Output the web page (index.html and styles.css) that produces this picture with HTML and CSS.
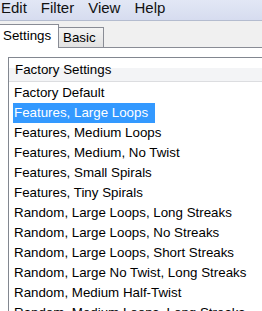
FILE: index.html
```html
<!DOCTYPE html>
<html lang="en">
<head>
    <meta charset="UTF-8">
    <meta name="viewport" content="width=device-width, initial-scale=1.0">
    <title>Presets</title>
    <link rel="stylesheet" href="styles.css">
</head>
<body>
    <div class="menubar">
        <span class="menu-item">Edit</span>
        <span class="menu-item">Filter</span>
        <span class="menu-item">View</span>
        <span class="menu-item">Help</span>
    </div>
    <div class="tabs">
        <div class="tab active">Settings</div>
        <div class="tab">Basic</div>
    </div>
    <div class="panel">
        <div class="listbox">
            <div class="list-header">Factory Settings</div>
            <div class="list-body">
                <div class="row"><span class="label">Factory Default</span></div>
                <div class="row"><span class="label selected">Features, Large Loops</span></div>
                <div class="row"><span class="label">Features, Medium Loops</span></div>
                <div class="row"><span class="label">Features, Medium, No Twist</span></div>
                <div class="row"><span class="label">Features, Small Spirals</span></div>
                <div class="row"><span class="label">Features, Tiny Spirals</span></div>
                <div class="row"><span class="label">Random, Large Loops, Long Streaks</span></div>
                <div class="row"><span class="label">Random, Large Loops, No Streaks</span></div>
                <div class="row"><span class="label">Random, Large Loops, Short Streaks</span></div>
                <div class="row"><span class="label">Random, Large No Twist, Long Streaks</span></div>
                <div class="row"><span class="label">Random, Medium Half-Twist</span></div>
                <div class="row"><span class="label">Random, Medium Loops, Long Streaks</span></div>
                <div class="row"><span class="label">Random, Medium Loops, No Streaks</span></div>
            </div>
        </div>
    </div>
</body>
</html>
```

FILE: styles.css
```css
body {
    margin: 0;
    width: 262px;
    height: 311px;
    overflow: hidden;
    background: #fff;
    font-family: "Liberation Sans", Arial, sans-serif;
    color: #000;
}

.menubar {
    display: flex;
    height: 19px;
    padding: 1px 0 0 1px;
    background: linear-gradient(#e2e7f5, #d6dcef);
    border-bottom: 1px solid #b4bccf;
    font-size: 15px;
    line-height: 14px;
    color: #111;
}

.menu-item {
    margin-right: 14px;
    white-space: nowrap;
}

.tabs {
    display: flex;
    align-items: flex-end;
    height: 26px;
    background: #f0f0f0;
    border-bottom: 1px solid #898c95;
    font-size: 13.33px;
    line-height: 17px;
}

.tab {
    box-sizing: border-box;
    white-space: nowrap;
    border-top: 1px solid #898c95;
    border-right: 1px solid #898c95;
}

.tab.active {
    width: 59px;
    height: 24px;
    margin-bottom: -1px;
    padding: 2px 0 0 3px;
    background: #fff;
}

.tab:not(.active) {
    width: 45px;
    height: 20px;
    padding: 1px 0 0 4px;
    background: linear-gradient(#f4f4f4, #e2e2e2);
}

.panel {
    padding: 9px 0 0 8px;
    background: #fff;
}

.listbox {
    border: 1px solid #828790;
    border-right: none;
    font-size: 13.33px;
}

.list-header {
    height: 23px;
    line-height: 23px;
    padding-left: 6px;
    white-space: nowrap;
    background: linear-gradient(#fff 0, #fff 42%, #f3f4f6 42%, #f3f4f6 100%);
    border-bottom: 1px solid #dcdde0;
}

.list-body {
    padding-top: 1px;
}

.row {
    height: 20px;
    line-height: 20px;
    padding-left: 5px;
    white-space: nowrap;
}

.label {
    display: inline-block;
    padding: 0 7px 0 1px;
    margin-left: -1px;
}

.label.selected {
    background: #3399ff;
    color: #fff;
}
```
